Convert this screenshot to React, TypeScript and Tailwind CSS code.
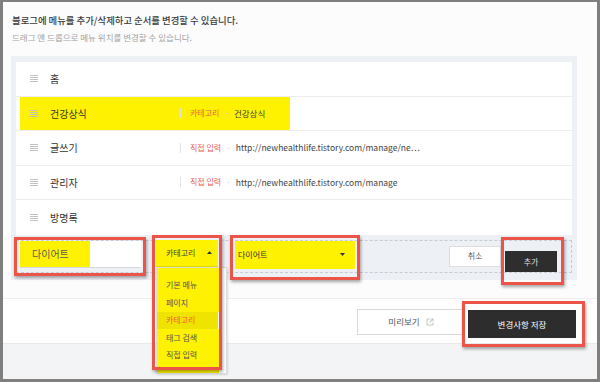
import React from 'react';

type MenuRow = {
  name: string;
  type?: string;
  value?: string;
  highlight?: boolean;
};

const ROWS: MenuRow[] = [
  { name: '홈' },
  { name: '건강상식', type: '카테고리', value: '건강상식', highlight: true },
  { name: '글쓰기', type: '직접 입력', value: 'http://newhealthlife.tistory.com/manage/ne⋯' },
  { name: '관리자', type: '직접 입력', value: 'http://newhealthlife.tistory.com/manage' },
  { name: '방명록' },
];

const MENU_TYPES = ['기본 메뉴', '페이지', '카테고리', '태그 검색', '직접 입력'];

const markBox = 'absolute pointer-events-none border-[3px] border-[#eb5549] shadow-[1px_2px_3px_rgba(0,0,0,0.35)]';

function Handle() {
  return (
    <svg width="8" height="7" viewBox="0 0 8 7" className="shrink-0">
      {[0.5, 2.5, 4.5, 6.5].map((y) => (
        <line key={y} x1="0" x2="8" y1={y} y2={y} stroke="#c2c2c2" strokeWidth="1" />
      ))}
    </svg>
  );
}

function Caret({ up }: { up?: boolean }) {
  return (
    <svg width="5" height="3" viewBox="0 0 5 3">
      <path d={up ? 'M0 3 L2.5 0 L5 3 Z' : 'M0 0 L2.5 3 L5 0 Z'} fill="#333" />
    </svg>
  );
}

function ExternalIcon() {
  return (
    <svg width="8" height="8" viewBox="0 0 8 8" fill="none" stroke="#b5b5b5" strokeWidth="0.8">
      <path d="M3.5 1 H1 V7 H7 V4.5" />
      <path d="M4.5 1 H7 V3.5 M7 1 L3.5 4.5" />
    </svg>
  );
}

export default function App() {
  return (
    <div className="w-[600px] h-[382px] flex flex-col bg-[#fcfcfd] border-[#7f7f7f] border-l-[3px] border-r-[3px] border-t-2 border-b-[3px] font-['Noto_Sans_CJK_KR','Noto_Sans',sans-serif] overflow-hidden">
      <div className="pl-[9px] pt-[12px]">
        <p className="text-[9.4px] leading-[13px] font-medium text-[#3a3a3a]">
          블로그에 메뉴를 추가/삭제하고 순서를 변경할 수 있습니다.
        </p>
        <p className="mt-[4px] text-[8.5px] leading-[12px] text-[#a3a3a3]">
          드래그 앤 드롭으로 메뉴 위치를 변경할 수 있습니다.
        </p>
      </div>

      <div className="mt-[13px] ml-[8px] w-[566px] bg-[#edf0f5] px-[5px] pt-[6px] pb-[7px]">
        <ul className="bg-white">
          {ROWS.map((row) => (
            <li
              key={row.name}
              className="relative flex items-center h-[34.5px] border-b border-[#ececec] last:border-b-0 pl-[14px]"
            >
              {row.highlight && (
                <div className="absolute left-[4px] top-0 bottom-0 w-[270px] bg-[#fff200]" />
              )}
              <div className="relative flex items-center w-[150px] gap-[12px]">
                <Handle />
                <span className="text-[10px] text-[#333]">{row.name}</span>
              </div>
              {row.type && (
                <div className="relative flex items-center">
                  <span className="w-px h-[10px] bg-[#e3e3e3]" />
                  <span className="ml-[9px] text-[8px] text-[#ee6153]">{row.type}</span>
                  <span className="mx-[5px] text-[8px] text-[#c4c4c4]">·</span>
                  <span className="text-[8.5px] text-[#444]">{row.value}</span>
                </div>
              )}
            </li>
          ))}
        </ul>

        <div className="mt-[5px] h-[33px] border border-dashed border-[#c6cbd5] flex items-start pl-[3px] pr-[14px]">
          <div className="relative w-[121px] h-[27px] bg-[linear-gradient(to_right,#fff200_70px,#fff_70px)] border-b border-[#d8d8d8]">
            <span className="block pl-[12px] text-[10px] leading-[26px] text-[#5a5a4a]">다이어트</span>
            <div className={`${markBox} -left-[6px] -top-[4px] -right-[5px] -bottom-[9px]`} />
          </div>

          <div className="relative ml-[15px] -mt-px w-[62px] z-10">
            <div className="h-[27px] bg-[#fff200] border-b border-[#e2d800] flex items-center justify-between pl-[10px] pr-[6px]">
              <span className="text-[8px] text-[#444]">카테고리</span>
              <Caret up />
            </div>
            <ul className="absolute top-full left-0 w-[71px] py-[9px] border border-[#dcdcdc] shadow-[1px_1px_2px_rgba(0,0,0,0.12)] bg-[linear-gradient(to_right,#fff200_62px,#fff_62px)]">
              {MENU_TYPES.map((t) => (
                <li
                  key={t}
                  className={
                    t === '카테고리'
                      ? 'h-[17.5px] pl-[9px] flex items-center text-[8px] text-[#f0603c] bg-[linear-gradient(to_right,#efe400_61px,#fff_61px)]'
                      : 'h-[17.5px] pl-[9px] flex items-center text-[8px] text-[#555]'
                  }
                >
                  {t}
                </li>
              ))}
            </ul>
            <div className={`${markBox} -left-[4px] -top-[5px] w-[70px] h-[135px]`} />
          </div>

          <div className="relative ml-[17px] w-[120px] h-[28px] bg-[#fff200] flex items-center justify-between pl-[3px] pr-[10px]">
            <span className="text-[8px] text-[#333]">다이어트</span>
            <Caret />
            <div className={`${markBox} -left-[5px] -top-[6px] -right-[5px] -bottom-[11px]`} />
          </div>

          <div className="ml-auto mt-[5px] flex gap-[4px]">
            <button className="w-[52px] h-[21px] bg-white border border-[#dedede] text-[8px] text-[#555]">취소</button>
            <div className="relative">
              <button className="w-[52px] h-[21px] bg-[#2e2e2e] text-[8px] text-[#ddd]">추가</button>
              <div className={`${markBox} -left-[4px] -top-[9px] -right-[7px] -bottom-[13px]`} />
            </div>
          </div>
        </div>
      </div>

      <div className="mt-[18px] h-[45px] border-t border-[#efefef] bg-white flex items-start justify-end gap-[3px] pt-[10px] pr-[21px]">
        <button className="w-[108px] h-[26px] bg-white border border-[#dadada] flex items-center justify-center gap-[6px] text-[8.5px] text-[#555]">
          미리보기 <ExternalIcon />
        </button>
        <div className="relative">
          <button className="w-[108px] h-[28px] -mt-px bg-[#2d2d2d] text-[8.5px] text-white">변경사항 저장</button>
          <div className={`${markBox} -left-[6px] -top-[8px] -right-[9px] -bottom-[9px]`} />
        </div>
      </div>

      <div className="flex-1 bg-[#f3f4f6] border-t border-[#eaeaea]" />
    </div>
  );
}
